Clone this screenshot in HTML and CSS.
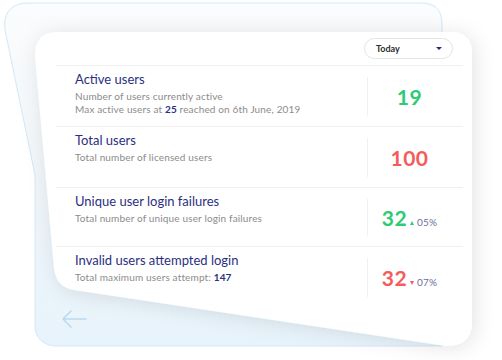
FILE: index.html
```html
<!DOCTYPE html>
<html lang="en">
<head>
    <meta charset="UTF-8">
    <meta name="viewport" content="width=device-width, initial-scale=1.0">
    <title>User stats</title>
    <link rel="stylesheet" href="styles.css">
</head>
<body>
    <div class="scene">
        <!-- decoration: back card, tilted front card, arrow -->
        <svg class="backdrop" width="502" height="360" viewBox="0 0 502 360">
            <defs>
                <linearGradient id="backFill" x1="0" y1="0" x2="0" y2="1">
                    <stop offset="0" stop-color="#fbfcfd"/>
                    <stop offset="0.45" stop-color="#f1f6f9"/>
                    <stop offset="1" stop-color="#e7f3fb"/>
                </linearGradient>
                <filter id="shade" x="-20%" y="-20%" width="140%" height="140%">
                    <feDropShadow dx="3" dy="2" stdDeviation="10" flood-color="#000" flood-opacity="0.11"/>
                </filter>
            </defs>
            <path d="M5 30 C3 12 12 3 28 3 H420 C436 3 442 10 442 25 V346 H56 C44 346 35 338 35 326 V175 Z"
                  fill="url(#backFill)" stroke="#d3e8f6" stroke-width="1"/>
            <path d="M86 319 H63 M71 311 L63 319 L71 327" fill="none" stroke="#b9daf1"
                  stroke-width="1.6" stroke-linecap="round" stroke-linejoin="round"/>
            <path d="M57 32 H450 Q472 32 472 54 V322 Q472 346 446 346 L74 290 Q56 287 54 268 L35 56 Q35 32 57 32 Z"
                  fill="#fff" filter="url(#shade)"/>
        </svg>

        <div class="card">
            <div class="toolbar">
                <div class="select"><span>Today</span><i class="caret"></i></div>
            </div>

            <div class="stat">
                <div class="stat-text">
                    <h2>Active users</h2>
                    <p>Number of users currently active</p>
                    <p>Max active users at <b>25</b> reached on 6th June, 2019</p>
                </div>
                <div class="stat-value good">19</div>
            </div>

            <div class="stat">
                <div class="stat-text">
                    <h2>Total users</h2>
                    <p>Total number of licensed users</p>
                </div>
                <div class="stat-value bad">100</div>
            </div>

            <div class="stat stat-short">
                <div class="stat-text">
                    <h2>Unique user login failures</h2>
                    <p>Total number of unique user login failures</p>
                </div>
                <div class="stat-value good"><span>32<i class="tri up"></i><small>05%</small></span></div>
            </div>

            <div class="stat">
                <div class="stat-text">
                    <h2>Invalid users attempted login</h2>
                    <p>Total maximum users attempt: <b>147</b></p>
                </div>
                <div class="stat-value bad"><span>32<i class="tri down"></i><small>07%</small></span></div>
            </div>
        </div>
    </div>
</body>
</html>
```

FILE: styles.css
```css
body {
    margin: 0;
    background: #fff;
    font-family: 'Lato', 'Open Sans', sans-serif;
}
.scene {
    position: relative;
    width: 502px;
    height: 360px;
    overflow: hidden;
}
.backdrop {
    position: absolute;
    left: 0;
    top: 0;
}
.card {
    position: relative;
    margin-left: 56px;
    width: 407px;
    padding-top: 38px;
}
.toolbar {
    display: flex;
    justify-content: flex-end;
    padding-right: 10px;
    margin-bottom: 6px;
}
.select {
    display: flex;
    align-items: center;
    justify-content: space-between;
    box-sizing: border-box;
    width: 89px;
    height: 21px;
    padding: 0 10px 0 11px;
    border: 1px solid #e4e4e4;
    border-radius: 11px;
    font-size: 9px;
    font-weight: 700;
    color: #2e2e2e;
}
.caret {
    width: 0;
    height: 0;
    border-left: 3px solid transparent;
    border-right: 3px solid transparent;
    border-top: 3px solid #262c7a;
}
.stat {
    display: grid;
    grid-template-columns: 1fr 96px;
    height: 60px;
    border-top: 1px solid #f0f0f0;
}
.stat-short {
    height: 58px;
}
.stat-text {
    padding: 5px 0 0 19px;
}
.stat-text h2 {
    margin: 0 0 3px;
    font-size: 13px;
    line-height: 16px;
    font-weight: 400;
    color: #2b2f80;
}
.stat-text p {
    margin: 0;
    font-size: 10px;
    line-height: 13px;
    letter-spacing: 0.15px;
    color: #8b8b8b;
}
.stat-text b {
    color: #2b2f80;
    font-weight: 700;
}
.stat-value {
    margin: 11px 0 10px;
    padding-right: 12px;
    border-left: 1px solid #f0f0f0;
    display: flex;
    align-items: center;
    justify-content: center;
    font-size: 21px;
    font-weight: 700;
    letter-spacing: 0.5px;
}
.good {
    color: #2ccb74;
}
.bad {
    color: #f65b5b;
}
.tri {
    display: inline-block;
    width: 0;
    height: 0;
    margin: 0 3px 1px 3px;
    border-left: 2.5px solid transparent;
    border-right: 2.5px solid transparent;
}
.tri.up {
    border-bottom: 4px solid currentColor;
}
.tri.down {
    border-top: 4px solid currentColor;
}
.stat-value small {
    font-size: 10px;
    font-weight: 400;
    letter-spacing: 0.2px;
    color: #6b6f98;
}
```
